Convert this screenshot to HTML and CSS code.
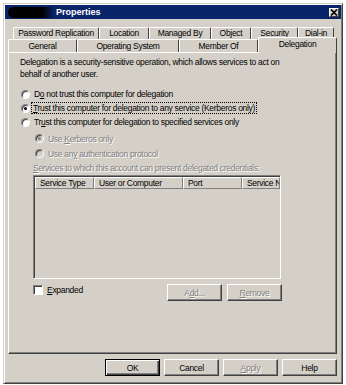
FILE: index.html
```html
<!DOCTYPE html>
<html lang="en">
<head>
  <meta charset="UTF-8">
  <meta name="viewport" content="width=device-width, initial-scale=1.0">
  <title>Properties</title>
  <link rel="stylesheet" href="styles.css">
</head>
<body>
  <div class="window">
    <div class="title-bar">
      <span class="redacted"></span>
      <span class="title-text">Properties</span>
      <span class="close-button">
        <svg width="8" height="7" viewBox="0 0 8 7"><path d="M1 0.5 L7 6.5 M7 0.5 L1 6.5" stroke="#000" stroke-width="1.6"/></svg>
      </span>
    </div>

    <div class="tabs">
      <div class="tab-row back">
        <div class="tab" style="width: 86px;">Password Replication</div>
        <div class="tab" style="width: 50px;">Location</div>
        <div class="tab" style="width: 62px;">Managed By</div>
        <div class="tab" style="width: 40px;">Object</div>
        <div class="tab" style="width: 47px;">Security</div>
        <div class="tab" style="width: 36px;">Dial-in</div>
      </div>
      <div class="tab-row front">
        <div class="tab" style="width: 69px;">General</div>
        <div class="tab" style="width: 102px;">Operating System</div>
        <div class="tab" style="width: 79px;">Member Of</div>
        <div class="tab selected" style="width: 79px;">Delegation</div>
      </div>
    </div>

    <div class="panel">
      <p class="intro">Delegation is a security-sensitive operation, which allows services to act on<br>behalf of another user.</p>

      <div class="option">
        <span class="radio"></span>
        <span class="label">D<u>o</u> not trust this computer for delegation</span>
      </div>
      <div class="option">
        <span class="radio checked"></span>
        <span class="label focused"><u>T</u>rust this computer for delegation to any service (Kerberos only)</span>
      </div>
      <div class="option">
        <span class="radio"></span>
        <span class="label">Tr<u>u</u>st this computer for delegation to specified services only</span>
      </div>

      <div class="option sub first disabled">
        <span class="radio checked"></span>
        <span class="label">Use <u>K</u>erberos only</span>
      </div>
      <div class="option sub disabled">
        <span class="radio"></span>
        <span class="label">Use an<u>y</u> authentication protocol</span>
      </div>

      <div class="services-label disabled"><u>S</u>ervices to which this account can present delegated credentials:</div>

      <div class="list-view">
        <div class="list-header">
          <div class="col" style="width: 59px;">Service Type</div>
          <div class="col" style="width: 89px;">User or Computer</div>
          <div class="col" style="width: 59px;">Port</div>
          <div class="col last">Service N</div>
        </div>
      </div>

      <div class="list-actions">
        <div class="check-option">
          <span class="checkbox"></span>
          <span><u>E</u>xpanded</span>
        </div>
        <div class="action-buttons">
          <button class="button disabled">A<u>d</u>d...</button>
          <button class="button disabled"><u>R</u>emove</button>
        </div>
      </div>
    </div>

    <div class="dialog-buttons">
      <button class="button default">OK</button>
      <button class="button">Cancel</button>
      <button class="button disabled"><u>A</u>pply</button>
      <button class="button">Help</button>
    </div>
  </div>
</body>
</html>
```
FILE: styles.css
```css
body {
  margin: 0;
  background-color: #fff;
  font-family: "Liberation Sans", Arial, sans-serif;
  font-size: 8.5px;
  letter-spacing: -0.3px;
  color: #000;
}
.window {
  box-sizing: border-box;
  width: 340px;
  height: 381px;
  margin: 3px 0 0 3px;
  background-color: #d4d0c8;
  border: 1px solid;
  border-color: #d4d0c8 #404040 #404040 #d4d0c8;
  box-shadow: inset 1px 1px #fff, inset -1px -1px #808080;
}
.title-bar {
  display: flex;
  align-items: center;
  height: 14px;
  margin: 1px 1px 0 1px;
  padding: 0 2px 0 3px;
  background-color: #0a246a;
}
.redacted {
  width: 46px;
  height: 11px;
  border-radius: 6px 3px 3px 6px;
  background: linear-gradient(to right, #000 75%, #0a246a);
}
.title-text {
  margin-left: 2px;
  color: #fff;
  font-weight: bold;
  font-size: 9px;
  letter-spacing: 0;
}
.close-button {
  display: flex;
  align-items: center;
  justify-content: center;
  box-sizing: border-box;
  width: 10px;
  height: 9px;
  margin-left: auto;
  background-color: #d4d0c8;
  border: 1px solid;
  border-color: #fff #404040 #404040 #fff;
}

/* tabs */
.tabs {
  margin-top: 8px;
  padding-left: 4px;
}
.tab-row {
  display: flex;
}
.tab-row.back {
  margin-left: 5px;
}
.tab {
  box-sizing: border-box;
  height: 12px;
  line-height: 11px;
  text-align: center;
  white-space: nowrap;
  border-top: 1px solid #fff;
  border-left: 1px solid #fff;
  border-right: 1px solid #404040;
  border-radius: 2px 2px 0 0;
}
.tab-row.front .tab {
  height: 13px;
  line-height: 12px;
}
.tab-row.front .tab.selected {
  position: relative;
  z-index: 1;
  height: 16px;
  margin-top: -2px;
  margin-bottom: -1px;
  line-height: 12px;
  background-color: #d4d0c8;
}

/* panel */
.panel {
  box-sizing: border-box;
  height: 302px;
  margin: 0 5px 0 4px;
  padding: 3px 0 0 11px;
  border: 1px solid;
  border-color: #fff #404040 #404040 #fff;
  box-shadow: inset -1px -1px #808080;
}
.intro {
  margin: 0 0 7px 0;
  line-height: 12px;
}
.option {
  display: flex;
  align-items: center;
  height: 14px;
}
.option.sub {
  height: 15px;
  padding-left: 14px;
}
.option.sub.first {
  margin-top: 2px;
}
.radio {
  position: relative;
  box-sizing: border-box;
  width: 9px;
  height: 9px;
  margin: 0 4px 0 1px;
  border-radius: 50%;
  border: 1px solid;
  border-color: #808080 #fff #fff #808080;
  box-shadow: inset 1px 1px #404040;
  background-color: #fff;
}
.radio.checked::after {
  content: "";
  position: absolute;
  top: 2px;
  left: 2px;
  width: 3px;
  height: 3px;
  border-radius: 50%;
  background-color: #000;
}
.label.focused {
  padding: 0 1px;
  margin-left: -2px;
  line-height: 10px;
  outline: 1px dotted #000;
}
.disabled {
  color: #808080;
  text-shadow: 1px 1px #fff;
}
.disabled .radio {
  background-color: #d4d0c8;
}
.disabled .radio.checked::after {
  background-color: #808080;
}
.services-label {
  margin: 1px 0 0 13px;
  line-height: 12px;
}

/* list view */
.list-view {
  box-sizing: border-box;
  width: 248px;
  height: 104px;
  margin: 1px 0 0 13px;
  border: 1px solid;
  border-color: #808080 #fff #fff #808080;
  box-shadow: inset 1px 1px #404040;
  overflow: hidden;
}
.list-header {
  display: flex;
  margin: 1px 0 0 1px;
}
.col {
  box-sizing: border-box;
  height: 12px;
  padding-left: 4px;
  line-height: 11px;
  white-space: nowrap;
  border: 1px solid;
  border-color: #fff #808080 #808080 #fff;
}
.col.last {
  flex: 1;
  overflow: hidden;
}
.list-actions {
  display: flex;
  justify-content: space-between;
  width: 249px;
  margin: 5px 0 0 13px;
}
.check-option {
  display: flex;
  align-items: center;
  height: 12px;
  gap: 4px;
}
.checkbox {
  box-sizing: border-box;
  width: 10px;
  height: 10px;
  border: 1px solid;
  border-color: #808080 #fff #fff #808080;
  box-shadow: inset 1px 1px #404040;
  background-color: #fff;
}
.action-buttons {
  display: flex;
  gap: 5px;
}

/* buttons */
.button {
  box-sizing: border-box;
  width: 55px;
  height: 17px;
  padding: 0;
  font-family: inherit;
  font-size: inherit;
  letter-spacing: inherit;
  color: #000;
  background-color: #d4d0c8;
  border: 1px solid;
  border-color: #fff #404040 #404040 #fff;
  box-shadow: inset -1px -1px #808080;
}
.button.disabled {
  color: #808080;
  text-shadow: 1px 1px #fff;
}
.button.default {
  border-color: #000;
  box-shadow: inset 1px 1px #fff, inset -1px -1px #404040, inset -2px -2px #808080;
}
.dialog-buttons {
  display: flex;
  justify-content: flex-end;
  gap: 4px;
  margin: 5px 5px 0 0;
}
```
